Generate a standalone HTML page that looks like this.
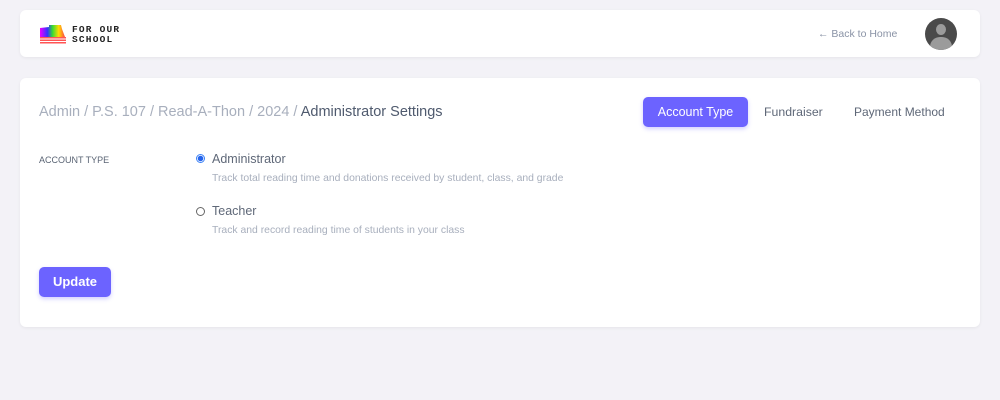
<!DOCTYPE html>
<html><head><style>
body{margin:0;background:#f3f2f7;width:1000px;height:400px;font-family:"Liberation Sans",sans-serif;position:relative;overflow:hidden}
.card{position:absolute;background:#fff;border-radius:6px;box-shadow:0 1px 3px rgba(0,0,0,.06)}
.t{position:absolute;white-space:nowrap}
</style></head><body>
<div class="card" style="left:20px;top:10px;width:960px;height:47px">
 <svg class="t" style="left:19px;top:14px" width="28" height="21" viewBox="0 0 28 21">
  <defs><linearGradient id="g" x1="0" x2="1"><stop offset="0" stop-color="#e0f"/><stop offset=".3" stop-color="#33f"/><stop offset=".5" stop-color="#3d3"/><stop offset=".75" stop-color="#fd0"/><stop offset="1" stop-color="#f44"/></linearGradient></defs>
  <path d="M1 4 L10 3 L10 1 L22 1 L23 5 L26 13 L1 13Z" fill="url(#g)"/>
  <rect x="1" y="13" width="26" height="1.5" fill="#f55"/><rect x="1" y="15.5" width="26" height="1.5" fill="#f55"/><rect x="1" y="18" width="26" height="1.5" fill="#f55"/>
 </svg>
 <div class="t" style="left:52px;top:15px;font-size:9.5px;font-weight:bold;letter-spacing:1.2px;line-height:10px;color:#222;font-family:'Liberation Mono',monospace">FOR OUR<br>SCHOOL</div>
 <div class="t" style="left:798px;top:18px;font-size:10.5px;color:#8a93a6">← Back to Home</div>
 <div class="t" style="left:905px;top:8px;width:32px;height:32px;border-radius:50%;background:#4a4a4a;overflow:hidden">
  <div style="position:absolute;left:11px;top:6px;width:10px;height:11px;border-radius:50%;background:#9b9b9b"></div>
  <div style="position:absolute;left:5px;top:19px;width:22px;height:16px;border-radius:10px 10px 0 0;background:#9b9b9b"></div>
 </div>
</div>
<div class="card" style="left:20px;top:78px;width:960px;height:249px">
 <div class="t" style="left:19px;top:26px;font-size:14.5px;color:#a8afbd">Admin / P.S. 107 / Read-A-Thon / 2024 / <span style="color:#4f5a6e">Administrator Settings</span></div>
 <div class="t" style="left:623px;top:19px;width:105px;height:30px;background:#6c63ff;border-radius:5px;color:#fff;font-size:12.5px;text-align:center;line-height:30px;box-shadow:0 2px 4px rgba(108,99,255,.3)">Account Type</div>
 <div class="t" style="left:744px;top:27px;font-size:12.3px;color:#5f6878">Fundraiser</div>
 <div class="t" style="left:834px;top:27px;font-size:12px;color:#5f6878">Payment Method</div>
 <div class="t" style="left:19px;top:77px;font-size:9px;color:#5a6474">ACCOUNT TYPE</div>
 <div class="t" style="left:176px;top:76px;width:7px;height:7px;border:1px solid #3b82f6;border-radius:50%;background:radial-gradient(circle,#2563eb 0 2.5px,#fff 3px)"></div>
 <div class="t" style="left:192px;top:74px;font-size:12.5px;color:#5f6878">Administrator</div>
 <div class="t" style="left:192px;top:95px;font-size:10.4px;color:#a8afbd">Track total reading time and donations received by student, class, and grade</div>
 <div class="t" style="left:176px;top:129px;width:7px;height:7px;border:1px solid #666;border-radius:50%"></div>
 <div class="t" style="left:192px;top:126px;font-size:12.5px;color:#5f6878">Teacher</div>
 <div class="t" style="left:192px;top:147px;font-size:10.4px;color:#a8afbd">Track and record reading time of students in your class</div>
 <div class="t" style="left:19px;top:189px;width:72px;height:30px;background:#6c63ff;border-radius:5px;color:#fff;font-size:13px;font-weight:bold;text-align:center;line-height:30px;box-shadow:0 2px 4px rgba(108,99,255,.3)">Update</div>
</div>
</body></html>
